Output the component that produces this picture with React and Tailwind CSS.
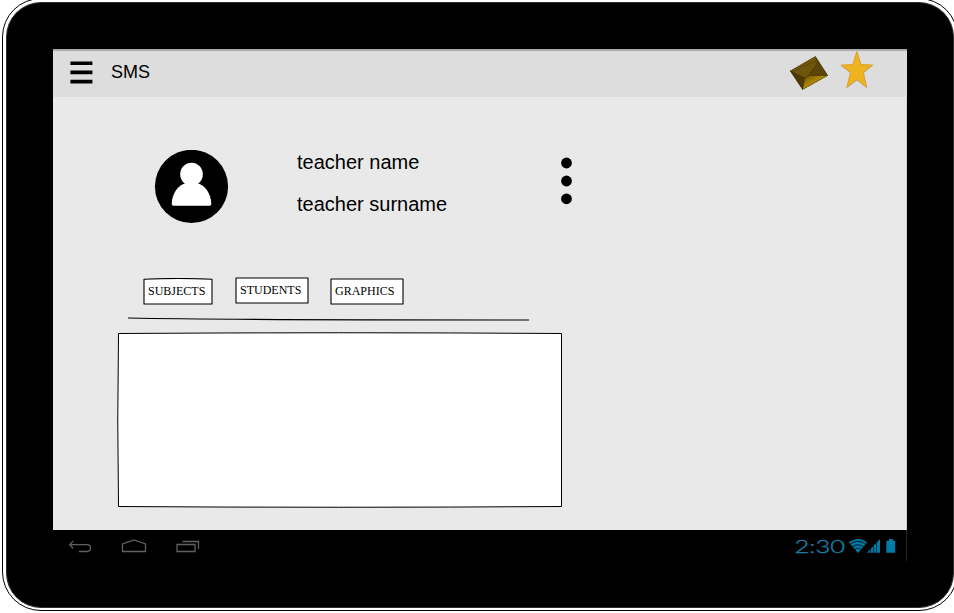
const navStroke = { fill: 'none', stroke: '#606060', strokeWidth: 1.3 };

function MenuIcon() {
  return (
    <svg className="block h-6 w-6" viewBox="0 0 24 24">
      <path d="M1.4 3.3h22M1.4 12.4h22M1.4 21.6h22" stroke="#000" strokeWidth="3.6" />
    </svg>
  );
}

function Envelope() {
  return (
    <svg className="block h-9 w-10" viewBox="0 0 40 36">
      <defs>
        <linearGradient id="envFront" x1="0" y1="0" x2="1" y2="1">
          <stop offset="0" stopColor="#6b5206" />
          <stop offset="0.5" stopColor="#b38b02" />
          <stop offset="1" stopColor="#8a6b00" />
        </linearGradient>
      </defs>
      <path d="M1.3 16 26.4 1.5 38.7 20.5 13.6 34.5Z" fill="#5b4608" />
      <path d="M1.3 16 11 20.2 15.5 23 13.6 34.5Z" fill="#4b3905" />
      <path d="M27.5 9 38.7 20.5 26.4 1.5Z" fill="#5a4507" />
      <path d="M13.6 34.5 15.8 23 23 20.4 38.7 20.5Z" fill="url(#envFront)" />
      <path d="M1.3 16 26.4 1.5 27.3 10 18.8 21.7Q17 23.5 14.5 22.4Z" fill="#6e560b" />
      <path d="M1.3 16 14.5 22.4Q17 23.5 18.8 21.7L27.3 9.5M15.5 23l-1.9 11.5M22 20.4h16.7" fill="none" stroke="#443403" strokeWidth=".7" />
      <path d="M3.5 16.8 26.5 6.2" fill="none" stroke="#443403" strokeWidth=".6" strokeDasharray="2 1" />
      <path d="M1.3 16 26.4 1.5 38.7 20.5 13.6 34.5Z" fill="none" stroke="#3c2e04" strokeWidth=".7" strokeDasharray="1.5 .7" />
    </svg>
  );
}

function Star() {
  return (
    <svg className="block h-10 w-9" viewBox="0 0 36 40">
      <path d="M18 .3 22.5 13.5 34.5 14 24.8 22 28.4 37.4 18 29.4 7.3 37.4 11.2 22 1.2 14.2 13.6 13.5Z" fill="#969080" opacity=".7" />
      <path d="M17.8 .5 22 13.6 33.3 14 24.2 21.4 27.5 36.2 17.8 28.4 7.9 36.2 11.5 21.4 2 14 13.8 13.6Z" fill="#efb320" stroke="#e0a11d" strokeWidth=".8" />
    </svg>
  );
}

function Avatar() {
  return (
    <svg className="block h-[74px] w-[76px]" viewBox="0 0 76 74">
      <circle cx="37.5" cy="36.4" r="36.6" fill="#000" />
      <ellipse cx="37.5" cy="24.3" rx="11.3" ry="11.6" fill="#fff" />
      <path d="M17.7 54C18 43 24.5 34.5 32 33.3h11C50.5 34.5 57 43 57.3 54q0 1.8-1.8 1.8h-36q-1.8 0-1.8-1.8Z" fill="#fff" />
    </svg>
  );
}

function Dots() {
  return (
    <svg className="block h-12 w-3" viewBox="0 0 12 48">
      <circle cx="5.5" cy="6" r="5.4" />
      <circle cx="5.5" cy="24" r="5.4" />
      <circle cx="5.5" cy="41.8" r="5.4" />
    </svg>
  );
}

function Tab({ label, className, outline }) {
  return (
    <button className={`relative h-[27px] pb-px pl-[5px] text-left font-['Liberation_Serif',serif] text-[12px] leading-[24px] text-black ${className}`}>
      <svg className="absolute inset-0 block h-full w-full" aria-hidden="true">
        <path d={outline} fill="#fff" stroke="#000" strokeWidth="1.1" strokeLinejoin="round" />
      </svg>
      <span className="relative">{label}</span>
    </button>
  );
}

function NavBar() {
  return (
    <nav className="flex h-[31px] items-start border-r border-[#242424] bg-black">
      <svg className="ml-[15px] mt-2 block h-4 w-6" viewBox="0 0 24 16" {...navStroke}>
        <path d="M5.2 2.9 1.7 6.7l3.5 3.8M1.7 6.7h17.4a3.4 3.4 0 0 1 0 6.8H11" />
      </svg>
      <svg className="ml-[29px] mt-2 block h-4 w-[26px]" viewBox="0 0 26 16" {...navStroke}>
        <path d="M1.5 13.5V6L13 2l11.5 4v7.5Z" />
      </svg>
      <svg className="ml-[29px] mt-2 block h-4 w-6" viewBox="0 0 24 16" {...navStroke}>
        <path d="M1 6.5H19v7H1ZM6.5 3.5h16v7.2" />
      </svg>
      <div className="ml-auto mr-[10px] mt-1.5 flex h-5 items-start">
        <svg className="block h-5 w-[53px]" viewBox="0 0 53 20">
          <text x="-.5" y="16.7" textLength="50.5" lengthAdjust="spacingAndGlyphs" strokeWidth=".35" className="fill-[#1a80a8] stroke-[#1a80a8] font-['Lato'] text-[18.5px] font-light">2:30</text>
        </svg>
        <svg className="ml-[1px] block h-5 w-[18px]" viewBox="0 0 18 20">
          <path d="M0 6.5C5 1.8 13 1.8 18 6.5L9 17Z" fill="#007ba7" />
          <path d="M1 8.5q8-6.5 16 0M3.3 11q5.7-4.5 11.4 0M5.6 13.4q3.4-2.6 6.8 0" fill="none" stroke="#000" strokeWidth=".8" />
        </svg>
        <svg className="block h-5 w-[14px]" viewBox="0 0 14 20">
          <path d="M0 16.8 13 3v13.8Z" fill="#007ba7" />
          <path d="M3.5 3v14M6.5 3v14M9.5 3v14" stroke="#000" strokeWidth=".6" />
        </svg>
        <svg className="ml-[5px] block h-5 w-[10px]" viewBox="0 0 10 20">
          <path d="M.3 4.7H3V3h4v1.7h2.2v12.1H.3Z" fill="#007ba7" />
        </svg>
      </div>
    </nav>
  );
}

export default function App() {
  return (
    <div className="h-[613px] w-[954px] overflow-hidden bg-white font-['Liberation_Sans',sans-serif] text-black">
      <div className="-mt-[2px] ml-[2px] h-[613px] w-[956px] rounded-[39px] border-[1.4px] border-black bg-white pl-[3px] pt-[3px]">
        <div className="h-[606px] w-[948px] rounded-[35px] border border-[#303030] bg-black pl-[46px] pt-[46px]">
          <main className="flex h-[512px] w-[854px] flex-col">
            <header className="flex h-12 items-start border-t-2 border-[#acacac] bg-[#dddddd]">
              <div className="ml-4 mt-[9px]"><MenuIcon /></div>
              <h1 className="ml-[18px] mt-[9px] text-[18px] leading-6">SMS</h1>
              <div className="ml-auto mt-1"><Envelope /></div>
              <div className="ml-[10px] mr-[32px]"><Star /></div>
            </header>
            <section className="flex h-[433px] flex-col border-r border-[#cfcfcf] bg-[#e9e9e9]">
              <div className="ml-[101px] mt-[53px] flex items-start">
                <Avatar />
                <div className="ml-[67px] flex w-[264px] flex-col gap-[18px] text-[20px] leading-6">
                  <p>teacher name</p>
                  <p>teacher surname</p>
                </div>
                <div className="mt-[7px]"><Dots /></div>
              </div>
              <div className="ml-[90px] mt-[54px] flex h-[26px] items-start">
                <Tab label="SUBJECTS" className="w-[70px]" outline="M1 1.2Q35 -.2 69 1.2V26H1Z" />
                <Tab label="STUDENTS" className="-mt-[1px] ml-[22px] w-[74px]" outline="M1 1H73V26H1Z" />
                <Tab label="GRAPHICS" className="ml-[21px] w-[74px]" outline="M1 1H73V26H1Z" />
              </div>
              <svg className="ml-[75px] mt-[13px] block h-1 w-[401px]" viewBox="0 0 401 4">
                <path d="M0 1Q100 3 401 3" fill="none" stroke="#000" strokeWidth="1.1" />
              </svg>
              <svg className="ml-16 mt-[11px] block h-[177px] w-[446px]" viewBox="0 0 446 177">
                <path d="M1.5 1.5Q220 0 444.5 1.5V174.5Q220 176 1.5 174.5Q0 90 1.5 1.5Z" fill="#fff" stroke="#000" strokeWidth="1" />
              </svg>
            </section>
            <NavBar />
          </main>
        </div>
      </div>
    </div>
  );
}
